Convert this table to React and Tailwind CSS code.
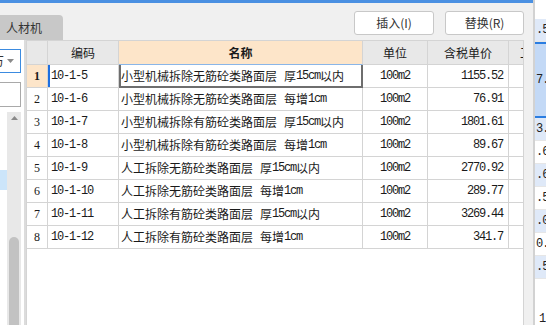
import React from 'react';

const rows = [
  ['10-1-5', '小型机械拆除无筋砼类路面层 厚15cm以内', '100m2', '1155.52'],
  ['10-1-6', '小型机械拆除无筋砼类路面层 每增1cm', '100m2', '76.91'],
  ['10-1-7', '小型机械拆除有筋砼类路面层 厚15cm以内', '100m2', '1801.61'],
  ['10-1-8', '小型机械拆除有筋砼类路面层 每增1cm', '100m2', '89.67'],
  ['10-1-9', '人工拆除无筋砼类路面层 厚15cm以内', '100m2', '2770.92'],
  ['10-1-10', '人工拆除无筋砼类路面层 每增1cm', '100m2', '289.77'],
  ['10-1-11', '人工拆除有筋砼类路面层 厚15cm以内', '100m2', '3269.44'],
  ['10-1-12', '人工拆除有筋砼类路面层 每增1cm', '100m2', '341.7'],
];

const mono = "font-['Liberation_Mono',monospace] text-[12px] tracking-[-1.2px]";

function Mixed({ text }) {
  const parts = text.split(/([ -~]+)/).filter(Boolean);
  return parts.map((p, i) =>
    /^[ -~]+$/.test(p) ? (
      <span key={i} className={`${mono} ${p.startsWith(' ') ? 'ml-[1px]' : ''}`}>{p}</span>
    ) : (
      <span key={i}>{p}</span>
    )
  );
}

const cell = 'border-r border-b border-[#d4d4d4] h-[23px] flex items-center overflow-hidden whitespace-pre';
const head = 'border-r border-b border-[#d4d4d4] h-[24px] flex items-center justify-center overflow-hidden whitespace-nowrap bg-[#e8e8e8]';

function Grid() {
  return (
    <div className="grid grid-cols-[21px_71px_244px_65px_81px_15px] text-[12px] text-[#1a1a1a]">
      <div className={head} />
      <div className={head}>编码</div>
      <div className={`${head} !bg-[#fde5c9] font-bold border-b-[#8ab6e8]`}>名称</div>
      <div className={head}>单位</div>
      <div className={head}>含税单价</div>
      <div className={`${head} !justify-start pl-[11px]`}>工程量</div>

      {rows.map((r, i) => {
        const sel = i === 0;
        return (
          <React.Fragment key={r[0]}>
            <div
              className={`${cell} justify-center font-['Liberation_Serif',serif] text-[12px] ${
                sel ? 'bg-[#fde5c9] font-bold' : ''
              }`}
            >
              {i + 1}
            </div>
            <div className={`${cell} pl-[3px] ${mono} ${sel ? 'shadow-[inset_2px_0_0_#1f6fe0]' : ''}`}>
              {r[0]}
            </div>
            <div
              className={`${cell} pl-[2px] ${
                sel ? 'shadow-[inset_2px_0_0_#6e6e6e,inset_-1px_0_0_#6e6e6e,inset_0_-1px_0_#6e6e6e] border-r-[#6e6e6e] border-b-[#6e6e6e]' : ''
              }`}
            >
              <Mixed text={r[1]} />
            </div>
            <div className={`${cell} justify-center ${mono}`}>{r[2]}</div>
            <div className={`${cell} justify-end pr-[5px] ${mono}`}>{r[3]}</div>
            <div className={cell} />
          </React.Fragment>
        );
      })}
    </div>
  );
}

function Tri({ down, color }) {
  return (
    <svg width="7" height="4" viewBox="0 0 7 4">
      <path d={down ? 'M0 0h7L3.5 4z' : 'M0 4h7L3.5 0z'} fill={color} />
    </svg>
  );
}

function LeftPanel() {
  return (
    <div className="w-[26px] bg-white border-r-2 border-[#dcdcdc] flex flex-col">
      <div className="mt-[9px] h-[24px] w-[21px] border border-l-0 border-[#3b8be0] flex items-center overflow-hidden">
        <span className="-ml-[8px] text-[12px] text-[#333]">万</span>
        <span className="ml-[3px]">
          <Tri down color="#8a8a8a" />
        </span>
      </div>
      <div className="mt-[9px] h-[25px] w-[21px] border border-l-0 border-[#a9a9a9]" />
      <div className="mt-[5px] flex flex-1">
        <div className="w-[7px] flex flex-col">
          <div className="mt-[58px] h-[20px] bg-[#cce5fa]" />
        </div>
        <div className="w-[14px] bg-[#e8e8e8] flex flex-col items-center">
          <div className="pt-[4px]">
            <Tri color="#8a8a8a" />
          </div>
          <div className="flex-1" />
          <div className="w-[10px] h-[88px] bg-[#c2c2c2] rounded-t-[5px]" />
        </div>
      </div>
    </div>
  );
}

function RightPanel() {
  const r = 'h-[23px] flex items-center pl-[1px] border-b border-[#e6e6e6] whitespace-nowrap';
  return (
    <div className="flex-1 bg-white flex flex-col text-[12px] text-[#222] font-['Liberation_Mono',monospace] tracking-[-1px] overflow-hidden">
      <div className="h-[19px]" />
      <div className={`${r} bg-[#dfe9f8]`}>.5</div>
      <div className="h-[2px] bg-[#2a7de1]" />
      <div className="h-[72px] bg-[#c3d9f6] flex items-center pl-[1px]">7.</div>
      <div className="h-[2px] bg-[#2a7de1]" />
      <div className={`${r} bg-[#dfe9f8]`}>3.</div>
      <div className={r}>.6</div>
      <div className={`${r} bg-[#dfe9f8]`}>.6</div>
      <div className={r}>.5</div>
      <div className={`${r} bg-[#dfe9f8]`}>.0</div>
      <div className={r}>0.</div>
      <div className={`${r} bg-[#dfe9f8]`}>.5</div>
      <div className="flex-1 flex items-end pl-[4px] leading-[12px]">1</div>
    </div>
  );
}

export default function App() {
  return (
    <div className="w-[546px] h-[325px] flex overflow-hidden bg-[#f0f0f0] font-['Noto_Sans_CJK_SC',sans-serif]">
      <div className="w-[533px] flex flex-col">
        <div className="h-[3px] bg-[#4a90e2]" />
        <div className="h-[37px] flex items-end justify-between">
          <div className="w-[63px] h-[25px] bg-[#c8c8c8] rounded-tr-[4px] pl-[6px] text-[12px] leading-[25px] text-[#333]">
            人材机
          </div>
          <div className="self-start mt-[8px] mr-[9px] flex gap-[11px] text-[12px] text-[#333]">
            <button className="w-[80px] h-[24px] bg-white border border-[#c8c8c8] rounded-[3px]">插入(I)</button>
            <button className="w-[79px] h-[24px] bg-white border border-[#c8c8c8] rounded-[3px]">替换(R)</button>
          </div>
        </div>
        <div className="flex-1 flex min-h-0">
          <LeftPanel />
          <div className="w-[498px] bg-white border-t border-[#d4d4d4] border-l border-r overflow-hidden">
            <Grid />
          </div>
          <div className="flex-1" />
        </div>
      </div>
      <div className="w-[2px] bg-[#d2d2d2]" />
      <RightPanel />
    </div>
  );
}
